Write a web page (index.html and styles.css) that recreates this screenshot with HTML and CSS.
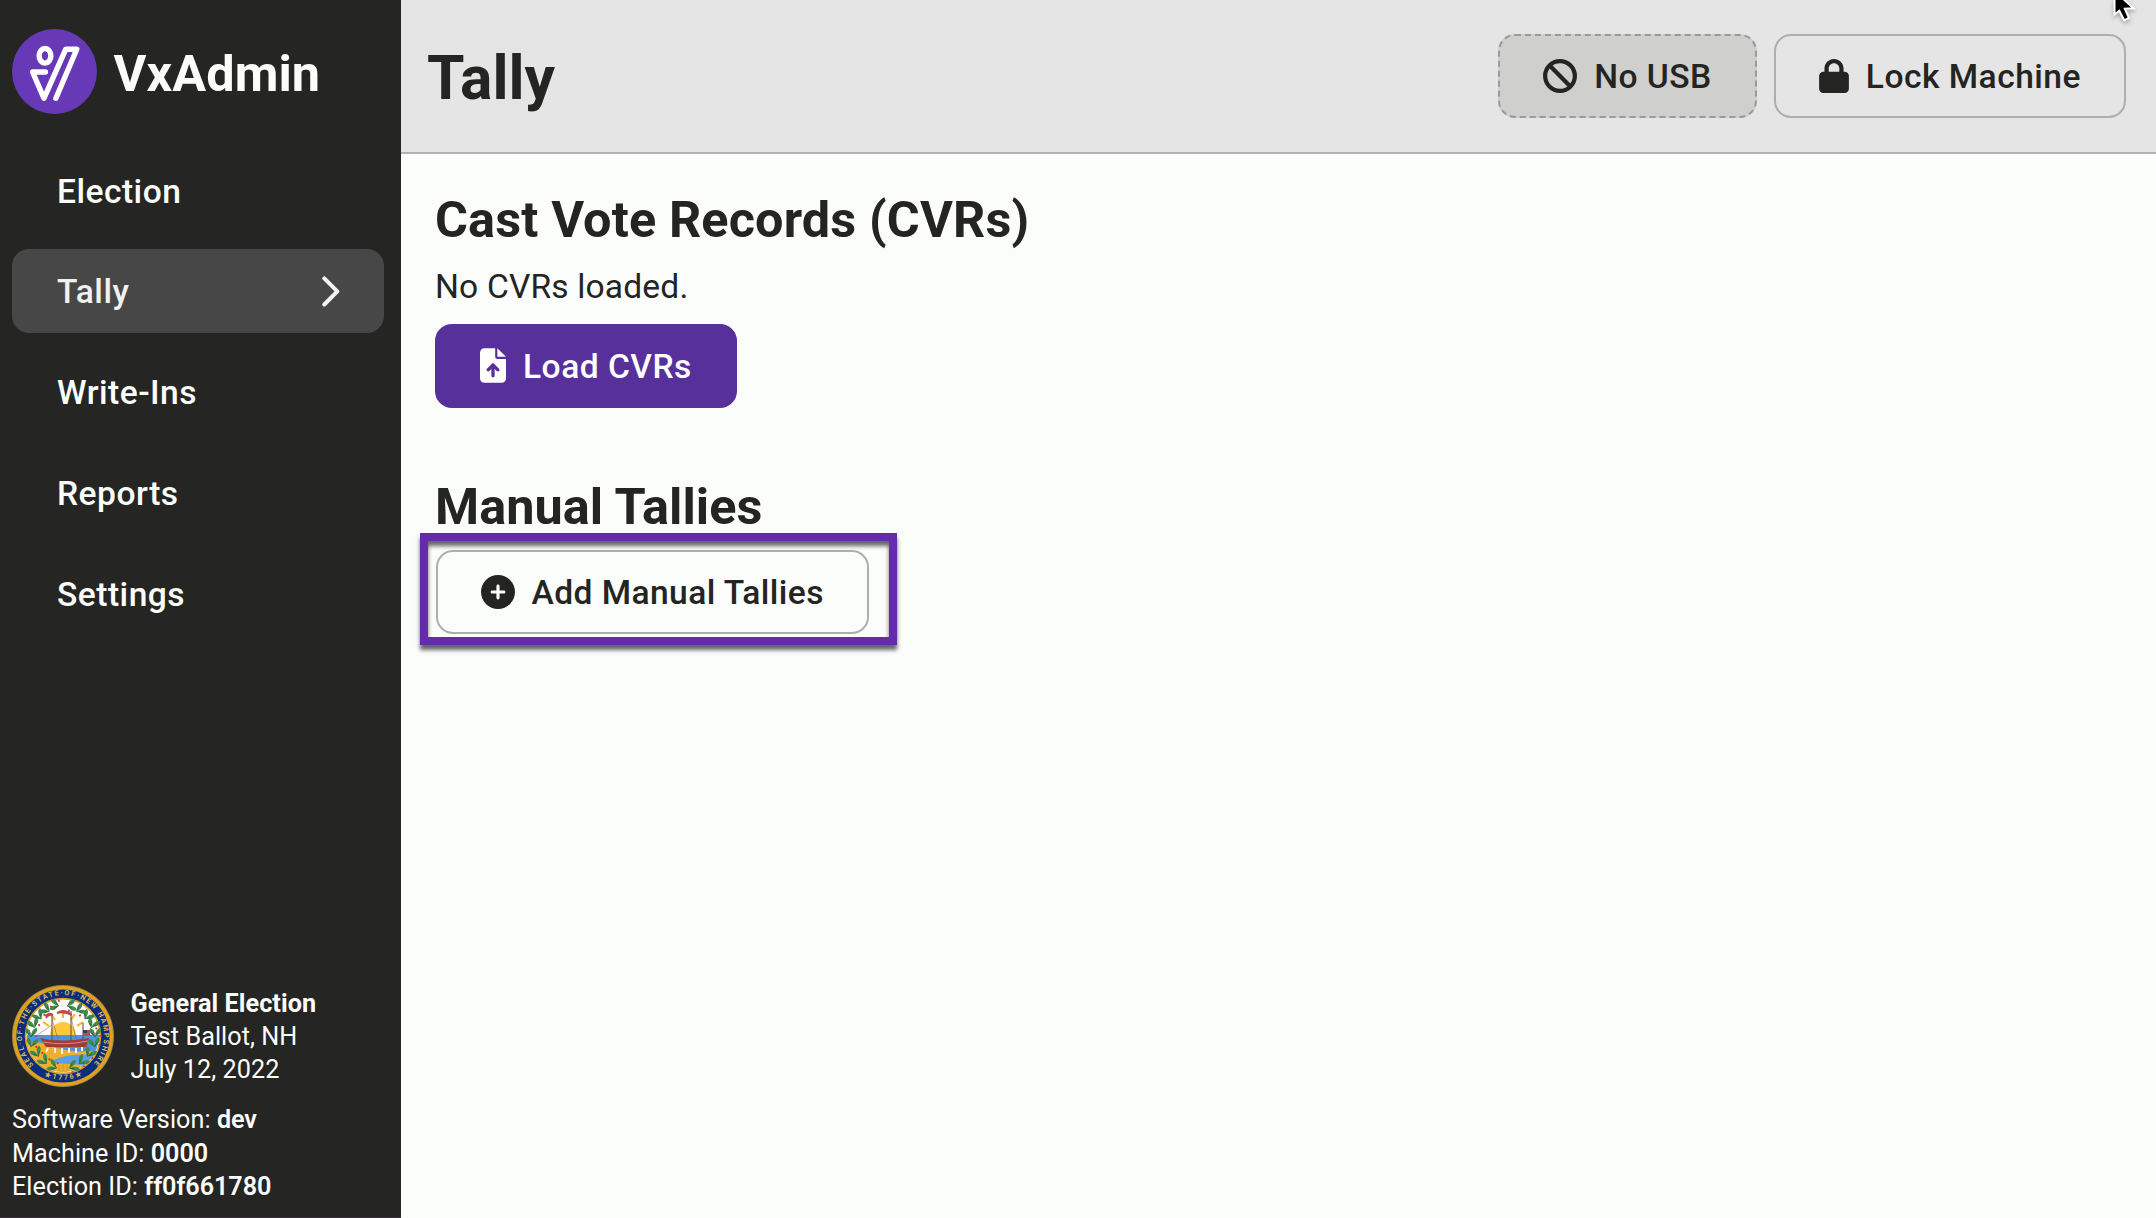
FILE: index.html
```html
<!DOCTYPE html>
<html lang="en">
<head>
<meta charset="utf-8">
<title>VxAdmin</title>
<link rel="stylesheet" href="styles.css">
</head>
<body>
<div class="app">
  <aside class="sidebar">
    <div class="brand">
      <svg class="logo" viewBox="0 0 85 85" aria-hidden="true">
        <circle cx="42.5" cy="42.5" r="42.5" fill="#6739b7"/>
        <g fill="none" stroke="#fff" stroke-width="5.4" stroke-linecap="round" stroke-linejoin="round">
          <ellipse cx="33" cy="26.8" rx="5.9" ry="7.3"/>
          <path d="M33.4 43H20.6L31.9 69.3L53.8 20.2H64.8L43.9 69.3"/>
        </g>
      </svg>
      <span class="brand-name">VxAdmin</span>
    </div>
    <nav class="nav">
      <a class="nav-item">Election</a>
      <a class="nav-item active">Tally
        <svg class="chevron" viewBox="0 0 18 31" aria-hidden="true"><path d="M2.3 2.3L15.3 15.4L2.3 28.5" fill="none" stroke="#f4f4f4" stroke-width="4" stroke-linecap="round" stroke-linejoin="round"/></svg>
      </a>
      <a class="nav-item">Write-Ins</a>
      <a class="nav-item">Reports</a>
      <a class="nav-item">Settings</a>
    </nav>
    <footer class="info">
      <div class="election">
        <svg class="seal" viewBox="0 0 102 102" aria-hidden="true">
          <defs>
            <path id="motto" d="M22.5 80.6A41 41 0 1 1 79.5 80.6"/>
            <path id="base" d="M28 88.4A44.500 44.500 0 0 0 74 88.4"/>
            <clipPath id="disc"><circle cx="51" cy="51" r="36"/></clipPath>
            <g id="leaf">
              <path d="M0 4Q-7 2-5-4Q0-3 0 4Q1-4 6-4Q7 2 0 4Z" fill="#3f8a4d"/>
              <path d="M-3 1L0 5L3 1" fill="none" stroke="#235f37" stroke-width=".8"/>
              <circle cx="5" cy="4" r="1.1" fill="#c93a45"/>
            </g>
          </defs>
          <circle cx="51" cy="51" r="51" fill="#9b8a55"/>
          <circle cx="51" cy="51" r="50" fill="#e0a21b"/>
          <circle cx="51" cy="51" r="46.6" fill="#0b2d7e"/>
          <circle cx="51" cy="51" r="38.3" fill="#e0a21b"/>
          <circle cx="51" cy="51" r="36.5" fill="#fffdf6"/>
          <g clip-path="url(#disc)">
            <path d="M10 50H92V92H10Z" fill="#4d94dc"/>
            <path d="M10 59Q25 54 45 63Q66 69 88 65V92H10Z" fill="#eeb02a"/>
            <path d="M42 75Q56 68 86 70V82Q65 79 42 78Z" fill="#5aa0e6"/>
            <path d="M38 50A13 13 0 0 1 64 50Z" fill="#ffc83d"/>
            <path d="M51 33V27M43 35L39 29M59 35L63 29M37 41L31 37M65 41L71 37" stroke="#f2b329" stroke-width="2"/>
          </g>
          <g fill="none" stroke="#70544c" stroke-width="1.1">
            <path d="M40 56V29M59 56V26M71 56V38"/>
            <path d="M24 51L40 40M40 34L46 54M59 32L64 54" stroke-width=".5"/>
          </g>
          <path d="M28 53Q48 58 77 53L74 62H34Z" fill="#a13c35"/>
          <path d="M31 57Q52 61 76 56" fill="none" stroke="#d78b7c" stroke-width="1"/>
          <path d="M36 63L34 67M43 63V68M50 63V69M57 63V68M64 63V68M70 62V66" stroke="#fff4dc" stroke-width="2"/>
          <path d="M33 30Q38 26 41 29V31Q38 29 34 34ZM45 27Q52 22 60 29V31Q52 27 45 29Z" fill="#c8434d"/>
          <path d="M71 45H78V51H71Z" fill="#bf4750"/><path d="M71 45H75V48H71Z" fill="#244179"/>
          <use href="#leaf" transform="translate(42 20) rotate(-80)"/>
          <use href="#leaf" transform="translate(33 24) rotate(-60)"/>
          <use href="#leaf" transform="translate(26 30) rotate(-40)"/>
          <use href="#leaf" transform="translate(21 38) rotate(-20)"/>
          <use href="#leaf" transform="translate(19 47)"/>
          <use href="#leaf" transform="translate(20 57) rotate(10)"/>
          <use href="#leaf" transform="translate(24 67) rotate(-30)"/>
          <use href="#leaf" transform="translate(31 75) rotate(-45)"/>
          <use href="#leaf" transform="translate(40 81) rotate(-65)"/>
          <use href="#leaf" transform="translate(60 20) rotate(80)"/>
          <use href="#leaf" transform="translate(69 24) rotate(60)"/>
          <use href="#leaf" transform="translate(76 30) rotate(40)"/>
          <use href="#leaf" transform="translate(81 38) rotate(20)"/>
          <use href="#leaf" transform="translate(83 47)"/>
          <use href="#leaf" transform="translate(82 57) rotate(-10)"/>
          <use href="#leaf" transform="translate(78 67) rotate(30)"/>
          <use href="#leaf" transform="translate(71 75) rotate(45)"/>
          <use href="#leaf" transform="translate(62 81) rotate(65)"/>
          <path d="M47 80V86M51 79V86M55 80V86" stroke="#d9a52b" stroke-width="2"/>
          <text class="seal-text"><textPath href="#motto" startOffset="1" textLength="190">SEAL·OF·THE·STATE·OF·NEW HAMPSHIRE</textPath></text>
          <text class="seal-text"><textPath href="#base" startOffset="50%" text-anchor="middle" textLength="38">★1776★</textPath></text>
        </svg>
        <div class="election-text">
          <strong>General Election</strong>
          <span>Test Ballot, NH</span>
          <span>July 12, 2022</span>
        </div>
      </div>
      <div class="machine">
        <span>Software Version: <b>dev</b></span>
        <span>Machine ID: <b>0000</b></span>
        <span>Election ID: <b>ff0f661780</b></span>
      </div>
    </footer>
  </aside>
  <div class="page">
    <header class="topbar">
      <h1>Tally</h1>
      <div class="actions">
        <button class="btn usb" disabled>
          <svg class="icon" viewBox="0 0 512 512" aria-hidden="true"><path fill="currentColor" d="M367.2 412.5L99.5 144.8C77.1 176.1 64 214.5 64 256c0 106 86 192 192 192c41.500 0 79.900-13.100 111.200-35.500zm45.300-45.300C434.900 335.900 448 297.500 448 256c0-106-86-192-192-192c-41.500 0-79.900 13.100-111.200 35.500L412.500 367.200zM0 256a256 256 0 1 1 512 0A256 256 0 1 1 0 256z"/></svg>
          <span class="label">No USB</span>
        </button>
        <button class="btn">
          <svg class="icon icon-lock" viewBox="0 0 448 512" aria-hidden="true"><path fill="currentColor" d="M144 144v48H304V144c0-44.200-35.800-80-80-80s-80 35.800-80 80zM80 192V144C80 64.500 144.500 0 224 0s144 64.500 144 144v48h16c35.300 0 64 28.700 64 64V448c0 35.300-28.700 64-64 64H64c-35.300 0-64-28.700-64-64V256c0-35.300 28.700-64 64-64H80z"/></svg>
          <span class="label">Lock Machine</span>
        </button>
      </div>
      <svg class="cursor" viewBox="0 0 24 26" aria-hidden="true"><path d="M1.500-8V15.500L6.300 11.800L11.200 21.300L16 19L11.800 9.700L20.500 9.300Z" fill="#000" stroke="#fff" stroke-width="2"/></svg>
    </header>
    <main class="content">
      <section>
        <h2>Cast Vote Records (CVRs)</h2>
        <p>No CVRs loaded.</p>
        <button class="btn primary">
          <svg class="icon icon-file" viewBox="0 0 384 512" aria-hidden="true"><path fill="currentColor" d="M64 0C28.700 0 0 28.700 0 64V448c0 35.300 28.700 64 64 64H320c35.300 0 64-28.700 64-64V160H256c-17.700 0-32-14.300-32-32V0H64zM256 0V128H384L256 0zM216 408c0 13.300-10.700 24-24 24s-24-10.700-24-24V305.900l-31 31c-9.400 9.400-24.600 9.400-33.900 0s-9.400-24.600 0-33.900l72-72c9.400-9.400 24.600-9.400 33.900 0l72 72c9.400 9.400 9.400 24.600 0 33.900s-24.600 9.400-33.900 0l-31-31V408z"/></svg>
          <span class="label">Load CVRs</span>
        </button>
      </section>
      <section class="manual">
        <h2>Manual Tallies</h2>
        <div class="callout">
          <button class="btn add">
            <svg class="icon" viewBox="0 0 512 512" aria-hidden="true"><path fill="currentColor" d="M256 512A256 256 0 1 0 256 0a256 256 0 1 0 0 512zM232 344V280H168c-13.300 0-24-10.700-24-24s10.700-24 24-24h64V168c0-13.300 10.700-24 24-24s24 10.700 24 24v64h64c13.300 0 24 10.700 24 24s-10.700 24-24 24H280v64c0 13.300-10.700 24-24 24s-24-10.700-24-24z"/></svg>
            <span class="label">Add Manual Tallies</span>
          </button>
        </div>
      </section>
    </main>
  </div>
</div>
</body>
</html>
```
FILE: styles.css
```css
* { box-sizing: border-box; }

body {
  margin: 0;
  font-family: Roboto, "Liberation Sans", sans-serif;
  font-size: 33.6px;
  letter-spacing: 0.15px;
  color: #242422;
  background: #fbfdfa;
}

.app {
  display: flex;
  width: 100vw;
  height: 100vh;
  overflow: hidden;
}

.sidebar {
  display: flex;
  flex-direction: column;
  flex: none;
  width: 401px;
  padding: 29px 17px 14px 12px;
  color: #fbfdfa;
  background: #252523;
  border-bottom: 1px solid #3b353b;
}

.brand {
  display: flex;
  align-items: center;
  gap: 16.5px;
  height: 85px;
}

.logo { width: 85px; height: 85px; }

.brand-name {
  padding-top: 4px;
  font-size: 50.4px;
  font-weight: 700;
  letter-spacing: 0.1px;
}

.nav {
  display: flex;
  flex-direction: column;
  gap: 16.7px;
  margin-top: 34.5px;
}

.nav-item {
  display: flex;
  align-items: center;
  justify-content: space-between;
  height: 84px;
  padding: 2px 44px 0 45px;
  border-radius: 17px;
  font-weight: 500;
  letter-spacing: 0.48px;
}

.active { padding-top: 0; color: #f1f1f0; background: #474747; }

.chevron { width: 18px; height: 31px; }

.info {
  display: flex;
  flex-direction: column;
  gap: 16px;
  margin-top: auto;
  font-size: 25.2px;
  line-height: 33.2px;
  letter-spacing: 0.05px;
}

.election {
  display: flex;
  align-items: center;
  gap: 16.5px;
}

.seal { flex: none; width: 102px; height: 102px; }

.seal-text {
  font-size: 7.2px;
  font-weight: 700;
  letter-spacing: 0;
  fill: #d9b75b;
}

.election-text, .machine { display: flex; flex-direction: column; }

.machine b { font-weight: 600; letter-spacing: -0.05px; }

.page {
  display: flex;
  flex-direction: column;
  flex: 1;
  min-width: 0;
}

.topbar {
  position: relative;
  display: flex;
  align-items: center;
  justify-content: space-between;
  height: 154px;
  padding: 0 30px 0 26px;
  background: #e5e5e5;
  border-bottom: 2px solid #b1b2b1;
}

h1, h2, p { margin: 0; }

h1 {
  padding-top: 5px;
  font-size: 60.5px;
  letter-spacing: 0;
}

h2 { font-size: 50.4px; line-height: 60px; }

p { margin: 15px 0; line-height: 44px; }

.actions { display: flex; gap: 17px; margin-top: -1px; }

.btn {
  display: flex;
  align-items: center;
  gap: 17px;
  height: 84px;
  padding: 0 43px;
  border: 2px solid #adafad;
  border-radius: 17px;
  font: inherit;
  font-weight: 500;
  letter-spacing: 0.48px;
  color: #242422;
  background: transparent;
}

.label { padding-top: 2px; }

.usb {
  background: #cfcfcd;
  border: 2px dashed #989a98;
}

.primary {
  color: #fff;
  background: #57309b;
  border-color: #57309b;
}

.icon { flex: none; width: 34px; height: 34px; }
.icon-lock { width: 30px; }
.icon-file { width: 26px; height: 35px; }

.cursor {
  position: absolute;
  top: -1px;
  right: 19px;
  width: 24px;
  height: 26px;
  filter: drop-shadow(0 2px 2px rgba(0, 0, 0, 0.3));
}

.content {
  display: flex;
  flex-direction: column;
  gap: 69px;
  padding: 35.5px 34px;
}

.manual h2 { letter-spacing: 0.05px; }

/* Highlight frame drawn round the button, outside the page's own spacing */
.callout {
  width: fit-content;
  margin: -4px 0 0 -15.5px;
  padding: 9px 20px 3px 8px;
  border: 8px solid #642cad;
  box-shadow: 0 5px 4px rgba(0, 0, 0, 0.6), inset 0 5px 4px rgba(0, 0, 0, 0.6);
}

.add { letter-spacing: 0.42px; }
```
